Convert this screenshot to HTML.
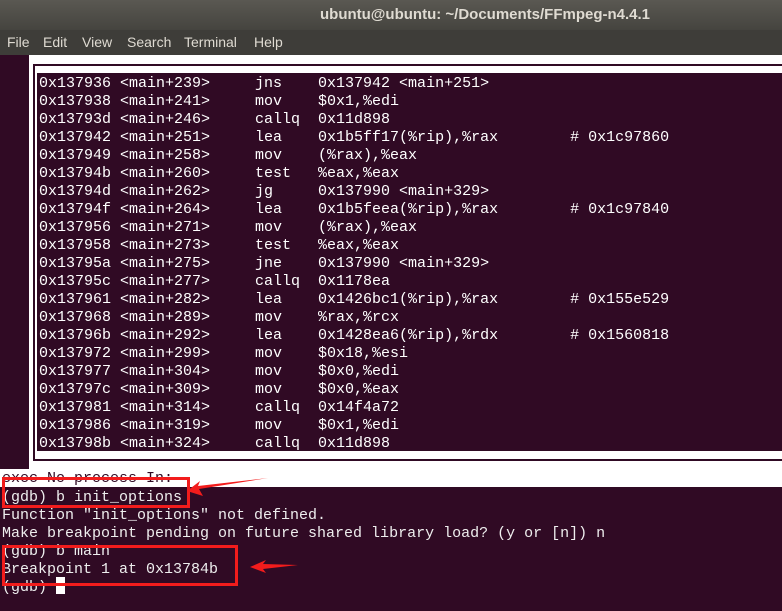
<!DOCTYPE html>
<html><head><meta charset="utf-8"><style>
*{margin:0;padding:0;box-sizing:border-box}
body{width:782px;height:611px;overflow:hidden;background:#300a24;position:relative;font-family:"Liberation Mono",monospace}
.title{position:absolute;left:0;top:0;width:782px;height:30px;background:linear-gradient(#5a5852,#45443f);color:#dfdbd2;font:bold 15px "Liberation Sans",sans-serif;line-height:30px}
.title span{position:absolute;left:320px}
.menu{position:absolute;left:0;top:30px;width:782px;height:25px;background:#3e3d39;color:#dfdbd2;font:14px "Liberation Sans",sans-serif;line-height:25px}
.menu span{position:absolute;top:0}
.pre{position:absolute;white-space:pre;font-size:15px;line-height:18px;color:#fff}
</style></head><body>
<div class="title"><span>ubuntu@ubuntu: ~/Documents/FFmpeg-n4.4.1</span></div>
<div class="menu"><span style="left:7px">File</span><span style="left:43px">Edit</span><span style="left:82px">View</span><span style="left:127px">Search</span><span style="left:184px">Terminal</span><span style="left:254px">Help</span></div>
<div style="position:absolute;left:29px;top:55px;width:753px;height:414px;background:#fff"></div>
<div style="position:absolute;left:0;top:469px;width:782px;height:18px;background:#fff"></div>
<div style="position:absolute;left:33px;top:64px;width:749px;height:397px;border-left:2px solid #300a24;border-top:2px solid #300a24;border-bottom:2px solid #300a24"></div>
<div style="position:absolute;left:37px;top:73px;width:745px;height:378px;background:#300a24"></div>
<div class="pre" style="left:39px;top:75px">0x137936 &lt;main+239&gt;     jns    0x137942 &lt;main+251&gt;
0x137938 &lt;main+241&gt;     mov    $0x1,%edi
0x13793d &lt;main+246&gt;     callq  0x11d898
0x137942 &lt;main+251&gt;     lea    0x1b5ff17(%rip),%rax        # 0x1c97860
0x137949 &lt;main+258&gt;     mov    (%rax),%eax
0x13794b &lt;main+260&gt;     test   %eax,%eax
0x13794d &lt;main+262&gt;     jg     0x137990 &lt;main+329&gt;
0x13794f &lt;main+264&gt;     lea    0x1b5feea(%rip),%rax        # 0x1c97840
0x137956 &lt;main+271&gt;     mov    (%rax),%eax
0x137958 &lt;main+273&gt;     test   %eax,%eax
0x13795a &lt;main+275&gt;     jne    0x137990 &lt;main+329&gt;
0x13795c &lt;main+277&gt;     callq  0x1178ea
0x137961 &lt;main+282&gt;     lea    0x1426bc1(%rip),%rax        # 0x155e529
0x137968 &lt;main+289&gt;     mov    %rax,%rcx
0x13796b &lt;main+292&gt;     lea    0x1428ea6(%rip),%rdx        # 0x1560818
0x137972 &lt;main+299&gt;     mov    $0x18,%esi
0x137977 &lt;main+304&gt;     mov    $0x0,%edi
0x13797c &lt;main+309&gt;     mov    $0x0,%eax
0x137981 &lt;main+314&gt;     callq  0x14f4a72
0x137986 &lt;main+319&gt;     mov    $0x1,%edi
0x13798b &lt;main+324&gt;     callq  0x11d898</div>
<div class="pre" style="left:2px;top:470px;color:#300a24">exec No process In:</div>
<div style="position:absolute;left:0;top:487px;width:782px;height:124px;background:#300a24"></div>
<div class="pre" style="left:2px;top:489px;color:#eee">(gdb) b init_options
Function "init_options" not defined.
Make breakpoint pending on future shared library load? (y or [n]) n
(gdb) b main
Breakpoint 1 at 0x13784b
(gdb) </div>
<div style="position:absolute;left:56px;top:577px;width:9px;height:17px;background:#fff"></div>
<div style="position:absolute;left:2px;top:477px;width:188px;height:31px;border:3px solid #f21c1c"></div>
<div style="position:absolute;left:2px;top:545px;width:236px;height:41px;border:3px solid #f21c1c"></div>
<svg style="position:absolute;left:0;top:0" width="782" height="611">
<path d="M187 491 L200 481 L198 486 L268 478 L199 489 L203 496 Z" fill="#f21c1c"/>
<path d="M250 567 L266 560 L263 564 L298 565 L263 569 L266 573 Z" fill="#f21c1c"/>
</svg>
</body></html>
